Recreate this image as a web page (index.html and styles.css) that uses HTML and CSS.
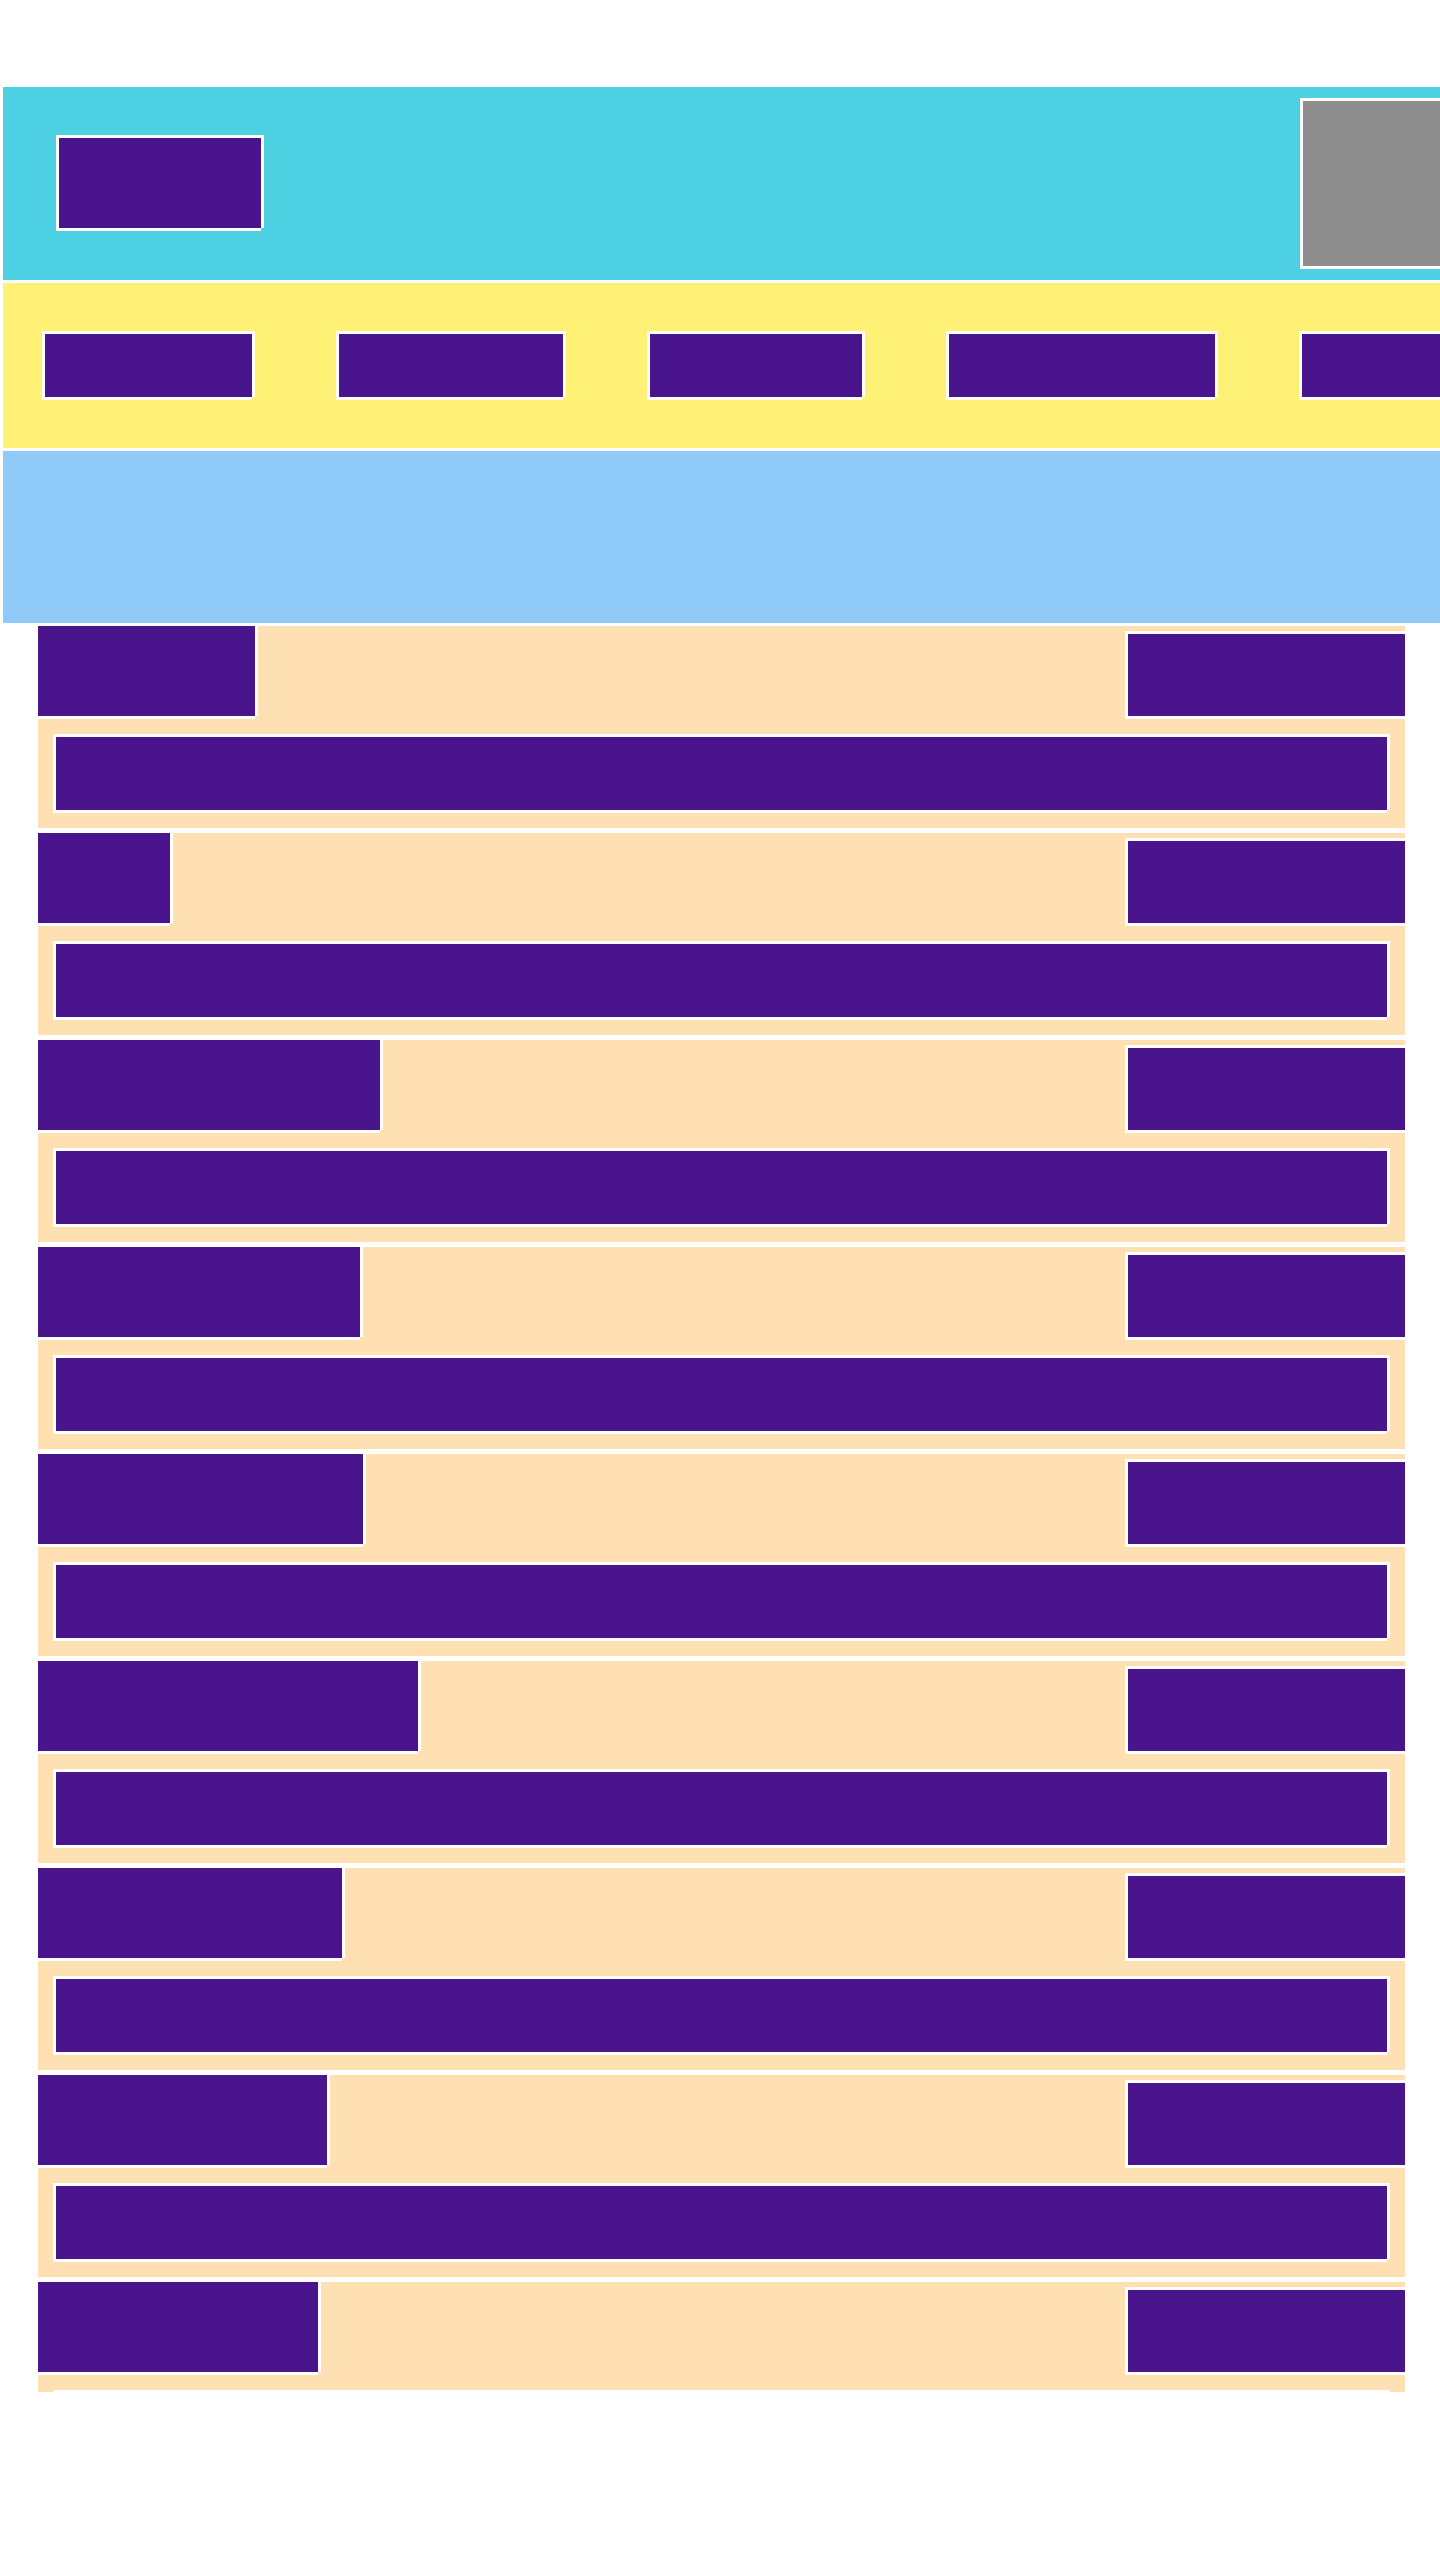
FILE: index.html
```html
<!DOCTYPE html>
<html lang="en">
<head>
    <meta charset="UTF-8">
    <meta name="viewport" content="width=device-width, initial-scale=1.0">
    <title>Layout</title>
    <link rel="stylesheet" href="styles.css">
</head>
<body>
    <div class="page">
        <header class="topbar">
            <div class="box logo"></div>
            <div class="box avatar"></div>
        </header>

        <nav class="menu">
            <div class="box menu-item"></div>
            <div class="box menu-item"></div>
            <div class="box menu-item"></div>
            <div class="box menu-item"></div>
            <div class="box menu-item"></div>
        </nav>

        <section class="hero"></section>

        <div class="list">
            <div class="row">
                <div class="row-head">
                    <div class="box row-title"></div>
                    <div class="box row-action"></div>
                </div>
                <div class="row-body"><div class="box row-text"></div></div>
            </div>
            <div class="row">
                <div class="row-head">
                    <div class="box row-title"></div>
                    <div class="box row-action"></div>
                </div>
                <div class="row-body"><div class="box row-text"></div></div>
            </div>
            <div class="row">
                <div class="row-head">
                    <div class="box row-title"></div>
                    <div class="box row-action"></div>
                </div>
                <div class="row-body"><div class="box row-text"></div></div>
            </div>
            <div class="row">
                <div class="row-head">
                    <div class="box row-title"></div>
                    <div class="box row-action"></div>
                </div>
                <div class="row-body"><div class="box row-text"></div></div>
            </div>
            <div class="row">
                <div class="row-head">
                    <div class="box row-title"></div>
                    <div class="box row-action"></div>
                </div>
                <div class="row-body"><div class="box row-text"></div></div>
            </div>
            <div class="row">
                <div class="row-head">
                    <div class="box row-title"></div>
                    <div class="box row-action"></div>
                </div>
                <div class="row-body"><div class="box row-text"></div></div>
            </div>
            <div class="row">
                <div class="row-head">
                    <div class="box row-title"></div>
                    <div class="box row-action"></div>
                </div>
                <div class="row-body"><div class="box row-text"></div></div>
            </div>
            <div class="row">
                <div class="row-head">
                    <div class="box row-title"></div>
                    <div class="box row-action"></div>
                </div>
                <div class="row-body"><div class="box row-text"></div></div>
            </div>
            <div class="row">
                <div class="row-head">
                    <div class="box row-title"></div>
                    <div class="box row-action"></div>
                </div>
                <div class="row-body"><div class="box row-text"></div></div>
            </div>
        </div>
    </div>
</body>
</html>
```

FILE: styles.css
```css
html, body {
    margin: 0;
    padding: 0;
    background-color: #ffffff;
    font-family: "Liberation Sans", Arial, sans-serif;
}
.page {
    width: 1440px;
    height: 2560px;
    box-sizing: border-box;
    padding: 87px 0 0 3px;
    overflow: hidden;
}

/* purple block with the white frame (bottom-right corner left open) */
.box {
    flex-shrink: 0;
    background-color: #4a148c;
    box-shadow: -3px -3px 0 #ffffff, 3px -3px 0 #ffffff, -3px 3px 0 #ffffff,
                3px 0 0 #ffffff, 0 3px 0 #ffffff;
}

.topbar {
    display: flex;
    align-items: center;
    justify-content: space-between;
    width: 1600px;
    height: 193px;
    box-sizing: border-box;
    padding: 0 60px 0 56px;
    margin-bottom: 3px;
    background-color: #4dd0e1;
}
.logo {
    width: 202px;
    height: 90px;
    margin-bottom: 1px;
}
.avatar {
    width: 240px;
    height: 165px;
    background-color: #8e8e8e;
}

.menu {
    display: flex;
    align-items: center;
    gap: 87px;
    width: 1600px;
    height: 165px;
    box-sizing: border-box;
    padding-left: 42px;
    margin-bottom: 3px;
    background-color: #fff176;
}
.menu-item {
    height: 63px;
}
.menu-item:nth-child(1) { width: 207px; }
.menu-item:nth-child(2) { width: 224px; }
.menu-item:nth-child(3) { width: 212px; }
.menu-item:nth-child(4) { width: 266px; }
.menu-item:nth-child(5) { width: 240px; }

.hero {
    width: 1600px;
    height: 172px;
    margin-bottom: 3px;
    background-color: #90caf9;
}

.list {
    width: 1367px;
    height: 1766px;
    margin-left: 35px;
    overflow: hidden;
}
.row {
    display: flex;
    flex-direction: column;
    margin-bottom: 5px;
    background-color: #ffe0b2;
}
.row-head {
    display: flex;
    justify-content: space-between;
    align-items: flex-end;
}
.row-title {
    height: 90px;
}
.row-action {
    width: 277px;
    height: 82px;
}
.row-body {
    padding: 21px 18px 18px;
}
.row-text {
    height: 73px;
}
.row:nth-child(1) .row-title { width: 217px; }
.row:nth-child(2) .row-title { width: 132px; }
.row:nth-child(3) .row-title { width: 342px; }
.row:nth-child(4) .row-title { width: 322px; }
.row:nth-child(5) .row-title { width: 325px; }
.row:nth-child(6) .row-title { width: 380px; }
.row:nth-child(7) .row-title { width: 304px; }
.row:nth-child(8) .row-title { width: 289px; }
.row:nth-child(9) .row-title { width: 280px; }
```
